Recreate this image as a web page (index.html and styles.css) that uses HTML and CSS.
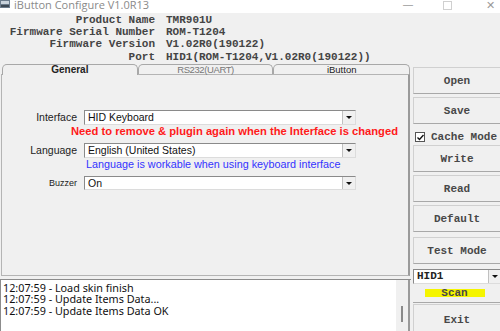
FILE: index.html
```html
<!DOCTYPE html>
<html lang="en">
<head>
    <meta charset="UTF-8">
    <title>iButton Configure V1.0R13</title>
    <link rel="stylesheet" href="styles.css">
</head>
<body>
    <!-- Title bar -->
    <div class="titlebar">
        <svg class="app-icon" width="10" height="8" viewBox="0 0 10 8">
            <rect x="0" y="0" width="10" height="8" fill="#6b7c8c"/>
            <rect x="1" y="1" width="8" height="3" fill="#c9d3dc"/>
            <rect x="1" y="5" width="8" height="2" fill="#3e4a55"/>
        </svg>
        <span class="title">iButton Configure V1.0R13</span>
        <div class="win-controls">
            <span class="min">&#8212;</span>
            <span class="max"></span>
            <span class="close">&#10005;</span>
        </div>
    </div>

    <div class="main">
        <div class="left">
            <!-- Device info -->
            <div class="info">
                <span class="key">Product Name</span><span class="val">TMR901U</span>
                <span class="key">Firmware Serial Number</span><span class="val">ROM-T1204</span>
                <span class="key">Firmware Version</span><span class="val">V1.02R0(190122)</span>
                <span class="key">Port</span><span class="val">HID1(ROM-T1204,V1.02R0(190122))</span>
            </div>

            <!-- Tabs -->
            <div class="tabs">
                <div class="tab active">General</div>
                <div class="tab disabled">RS232(UART)</div>
                <div class="tab">iButton</div>
            </div>

            <div class="panel">
                <div class="field">
                    <span class="label">Interface</span>
                    <div class="select">HID Keyboard<span class="arrow"></span></div>
                </div>
                <div class="note red">Need to remove &amp; plugin again when the Interface is changed</div>
                <div class="field lang">
                    <span class="label">Language</span>
                    <div class="select">English (United States)<span class="arrow"></span></div>
                </div>
                <div class="note blue">Language is workable when using keyboard interface</div>
                <div class="field buzzer">
                    <span class="label small">Buzzer</span>
                    <div class="select short">On<span class="arrow"></span></div>
                </div>
            </div>

            <div class="splitter"></div>

            <!-- Log -->
            <div class="log">
                <div class="log-lines">
                    <div>12:07:59 - Load skin finish</div>
                    <div>12:07:59 - Update Items Data...</div>
                    <div>12:07:59 - Update Items Data OK</div>
                </div>
                <div class="scrollbar"><span class="thumb"></span></div>
            </div>
        </div>

        <!-- Side buttons -->
        <div class="side">
            <div class="btn">Open</div>
            <div class="btn">Save</div>
            <div class="cache">
                <span class="checkbox">
                    <svg width="7" height="7" viewBox="0 0 7 7"><path d="M0.5 3.5 L2.5 5.5 L6.5 1" stroke="#111" stroke-width="1.4" fill="none"/></svg>
                </span>
                <span>Cache Mode</span>
            </div>
            <div class="btn">Write</div>
            <div class="btn">Read</div>
            <div class="btn">Default</div>
            <div class="btn test">Test Mode</div>
            <div class="combo">HID1<span class="arrow"></span></div>
            <div class="scan"><span>Scan</span></div>
            <div class="btn exit">Exit</div>
        </div>
    </div>
</body>
</html>
```

FILE: styles.css
```css
body {
    margin: 0;
    width: 500px;
    height: 331px;
    overflow: hidden;
    background-color: #f0f0f0;
    font-family: 'Liberation Sans', Arial, sans-serif;
    color: #222;
}

.titlebar {
    height: 13px;
    background-color: #fff;
    display: flex;
    align-items: flex-start;
    position: relative;
}

.app-icon {
    margin: 0 4px 0 0;
}

.title {
    font-family: 'Open Sans', sans-serif;
    font-size: 11px;
    line-height: 11px;
    margin-top: -1px;
    color: #8a8a8a;
}

.win-controls {
    position: absolute;
    top: 0;
    left: 403px;
    display: flex;
    align-items: center;
    height: 10px;
}

.win-controls span {
    color: #9a9a9a;
    font-size: 10px;
    line-height: 10px;
}

.win-controls .max {
    width: 7px;
    height: 7px;
    border: 1px solid #d0d0d0;
    margin-left: 30px;
}

.win-controls .close {
    margin-left: 34px;
    font-size: 11px;
}

.main {
    display: flex;
    height: 318px;
}

.left {
    width: 409px;
    margin-left: 1px;
    display: flex;
    flex-direction: column;
}

.info {
    display: grid;
    grid-template-columns: 154px auto;
    column-gap: 11px;
    padding-top: 1px;
    font-family: 'Liberation Mono', 'Courier New', monospace;
    font-weight: bold;
    font-size: 11px;
    line-height: 12.2px;
    color: #444;
}

.info .key {
    text-align: right;
}

.tabs {
    display: flex;
    margin-top: 1px;
    padding-left: 1px;
    position: relative;
    z-index: 1;
}

.tab {
    height: 9px;
    border: 1px solid #a8a8a8;
    border-bottom: none;
    border-radius: 5px 5px 0 0;
    text-align: center;
    font-size: 9.5px;
    line-height: 10px;
    color: #222;
    background-color: #f0f0f0;
}

.tab.active {
    width: 134px;
    height: 10px;
    margin-bottom: -1px;
    font-weight: bold;
    font-size: 10px;
    background-color: #f0f0f0;
}

.tab.disabled {
    width: 134px;
    color: #777;
    letter-spacing: -0.4px;
}

.tab:last-child {
    width: 135px;
}

.panel {
    height: 202px;
    border: 1px solid #b4b4b4;
    border-right: 2px solid #9a9a9a;
    padding-top: 35px;
    box-sizing: border-box;
}

.field {
    display: flex;
    align-items: center;
    height: 15px;
}

.label {
    width: 75px;
    text-align: right;
    font-size: 10.5px;
    color: #222;
    margin-right: 7px;
}

.label.small {
    font-size: 9px;
}

.select {
    width: 267px;
    height: 13px;
    background-color: #fff;
    border: 1px solid #8a8a8a;
    border-right-color: #dcdcdc;
    border-bottom-color: #dcdcdc;
    font-size: 10.5px;
    line-height: 13px;
    padding-left: 3px;
    display: flex;
    justify-content: space-between;
    color: #111;
}

.select .arrow,
.combo .arrow {
    width: 12px;
    background-color: #f0f0f0;
    border-left: 1px solid #c0c0c0;
    position: relative;
}

.select .arrow::after,
.combo .arrow::after {
    content: "";
    position: absolute;
    left: 3px;
    top: 5px;
    border-left: 3px solid transparent;
    border-right: 3px solid transparent;
    border-top: 3px solid #111;
}

.note {
    height: 13px;
    line-height: 13px;
}

.note.red {
    color: #ff1a1a;
    font-weight: bold;
    font-size: 11.2px;
    margin-left: 69px;
}

.note.blue {
    color: #3333ff;
    font-size: 10.8px;
    margin-left: 84px;
}

.field.lang {
    margin-top: 5px;
}

.field.buzzer {
    margin-top: 5px;
    height: 14px;
}

.select.short {
    height: 12px;
    line-height: 12px;
}

.splitter {
    height: 3px;
    border-bottom: 1px solid #8c8c8c;
    margin-left: -1px;
    width: 411px;
}

.log {
    flex: 1;
    display: flex;
    margin-left: -1px;
    border-left: 1px solid #8c8c8c;
}

.log-lines {
    width: 396px;
    background-color: #fff;
    font-family: 'Noto Sans', sans-serif;
    font-size: 10.8px;
    line-height: 11.6px;
    padding: 2px 0 0 2px;
    color: #111;
}

.scrollbar {
    width: 12px;
    border-right: 2px solid #9a9a9a;
    position: relative;
}

.scrollbar .thumb {
    position: absolute;
    left: 5px;
    top: 26px;
    width: 2px;
    height: 16px;
    background-color: #8a8a8a;
}

.side {
    flex: 1;
    margin-left: 3px;
    padding-top: 54px;
    display: flex;
    flex-direction: column;
    font-family: 'Liberation Mono', 'Courier New', monospace;
    font-weight: bold;
    font-size: 11px;
    color: #484848;
}

.btn {
    height: 25px;
    flex-shrink: 0;
    margin-bottom: 3px;
    border: 1px solid #d0d0d0;
    border-bottom: 1px solid #a8a8a8;
    border-right: none;
    display: flex;
    align-items: center;
    justify-content: center;
}

.btn.test {
    margin-top: 2px;
}

.cache {
    height: 10px;
    flex-shrink: 0;
    padding-top: 5px;
    margin-bottom: 3px;
    display: flex;
    align-items: center;
    line-height: 10px;
    padding-left: 2px;
}

.checkbox {
    width: 8px;
    height: 8px;
    border: 1px solid #555;
    background-color: #fff;
    display: flex;
    align-items: center;
    justify-content: center;
    margin-right: 6px;
}

.combo {
    height: 13px;
    flex-shrink: 0;
    margin-top: 2px;
    background-color: #fff;
    border: 1px solid #8a8a8a;
    border-right: none;
    border-bottom-color: #dcdcdc;
    display: flex;
    justify-content: space-between;
    line-height: 13px;
    padding-left: 3px;
    color: #222;
}

.combo .arrow {
    width: 11px;
}

.scan {
    height: 18px;
    flex-shrink: 0;
    display: flex;
    justify-content: center;
    align-items: center;
    border-bottom: 1px solid #a8a8a8;
    padding-right: 4px;
}

.scan span {
    width: 60px;
    height: 8px;
    line-height: 8px;
    background-color: #f5f500;
    text-align: center;
}

.btn.exit {
    height: 30px;
    margin-top: 1px;
    margin-bottom: 0;
}
```
